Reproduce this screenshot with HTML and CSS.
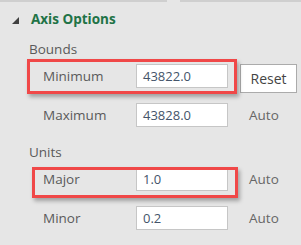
FILE: index.html
```html
<!DOCTYPE html>
<html lang="en">
<head>
  <meta charset="UTF-8">
  <meta name="viewport" content="width=device-width, initial-scale=1.0">
  <title>Format Axis</title>
  <link rel="stylesheet" href="styles.css">
</head>
<body>
  <div class="pane">
    <div class="strip"><span class="seg seg-a"></span><span class="seg seg-b"></span></div>

    <div class="head">
      <svg class="caret" width="7" height="7" viewBox="0 0 7 7"><path d="M0 7 L7 7 L7 0 Z"/></svg>
      <span class="head-title">Axis Options</span>
    </div>

    <div class="group">Bounds</div>
    <div class="fields">
      <div class="row">
        <span class="label">Minimum</span>
        <span class="box">43822.0</span>
        <button class="btn">Reset</button>
      </div>
      <div class="row">
        <span class="label">Maximum</span>
        <span class="box">43828.0</span>
        <span class="state">Auto</span>
      </div>
    </div>

    <div class="group group-units">Units</div>
    <div class="fields">
      <div class="row">
        <span class="label">Major</span>
        <span class="box">1.0</span>
        <span class="state">Auto</span>
      </div>
      <div class="row">
        <span class="label">Minor</span>
        <span class="box">0.2</span>
        <span class="state">Auto</span>
      </div>
    </div>

    <!-- annotation boxes drawn over the pane -->
    <div class="mark mark-min"></div>
    <div class="mark mark-major"></div>
  </div>
</body>
</html>
```

FILE: styles.css
```css
* {
  margin: 0;
  padding: 0;
  box-sizing: border-box;
}

body {
  background: #e6e6e6;
  font-family: 'Open Sans', 'Noto Sans', sans-serif;
  font-size: 13.5px;
  color: #5a5a5a;
}

.pane {
  position: relative;
  width: 301px;
  height: 245px;
  overflow: hidden;
}

.strip {
  display: flex;
  gap: 13px;
  height: 2px;
}

.seg {
  background: #cfcfcf;
}

.seg-a {
  width: 167px;
}

.seg-b {
  flex: 1;
}

.head {
  display: flex;
  align-items: center;
  gap: 12px;
  padding-left: 12px;
  margin-top: 8px;
  height: 18px;
}

.caret {
  fill: #404040;
  margin-top: 3px;
}

.head-title {
  color: #217346;
  font-weight: 700;
  font-size: 13.5px;
}

.group {
  padding-left: 29px;
  margin-top: 12px;
  line-height: 18px;
}

.group-units {
  margin-top: 16px;
}

.fields {
  display: flex;
  flex-direction: column;
  gap: 15px;
  margin-top: 6px;
}

.row {
  display: flex;
  align-items: flex-start;
  height: 24px;
  padding-left: 43px;
}

.label {
  width: 93px;
  line-height: 24px;
}

.box {
  width: 92px;
  height: 24px;
  background: #fff;
  border: 1px solid #c6c6c6;
  padding-left: 6px;
  line-height: 22px;
  font-size: 13px;
  color: #44546a;
}

.btn {
  margin-left: 12px;
  width: 57px;
  height: 29px;
  background: #fff;
  border: 1px solid #ababab;
  font: inherit;
  font-size: 14px;
  color: #444;
}

.state {
  margin-left: 21px;
  line-height: 24px;
  color: #666;
}

.mark {
  position: absolute;
  border: 3px solid #f04848;
  box-shadow: 2px 3px 4px rgba(0, 0, 0, 0.3);
}

.mark-min {
  left: 27px;
  top: 59px;
  width: 210px;
  height: 35px;
}

.mark-major {
  left: 32px;
  top: 167px;
  width: 206px;
  height: 31px;
}
```
